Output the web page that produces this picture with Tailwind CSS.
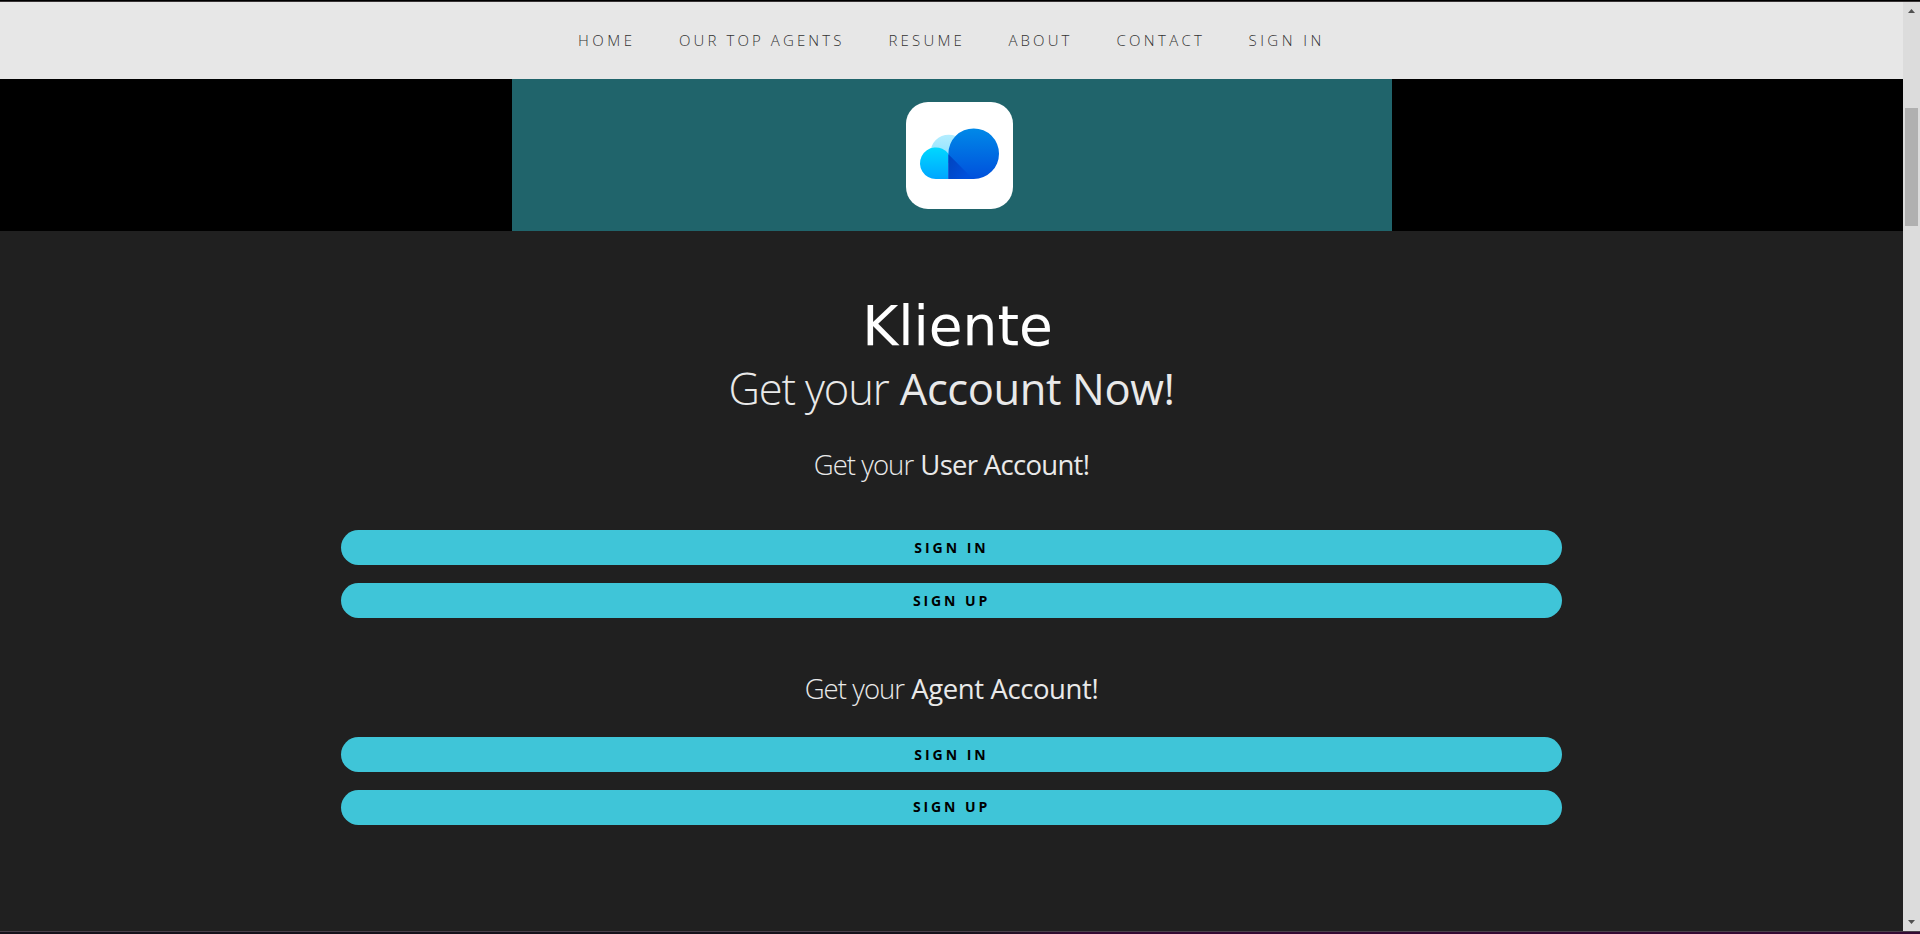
<!DOCTYPE html>
<html lang="en">
<head>
<meta charset="utf-8">
<title>Kliente</title>
<script src="https://cdn.jsdelivr.net/npm/@tailwindcss/browser@4"></script>
</head>
<body class="w-[1920px] h-[934px] overflow-hidden flex flex-col bg-[#202020] font-['Open_Sans',sans-serif]">
<div class="h-[2px] shrink-0 bg-black border-b border-[#383435]"></div>
<div class="flex h-[929px] shrink-0">
  <main class="w-[1903px] flex flex-col">
    <nav class="h-[77px] shrink-0 bg-[#e7e7e7] flex items-center pl-[578px] text-[15px] font-light text-[#333] whitespace-nowrap">
      <a class="w-[101px] tracking-[3.5px]">HOME</a>
      <a class="w-[209.5px] tracking-[3.1px]">OUR TOP AGENTS</a>
      <a class="w-[120px] tracking-[3.2px]">RESUME</a>
      <a class="w-[108px] tracking-[3.1px]">ABOUT</a>
      <a class="w-[132px] tracking-[3.3px]">CONTACT</a>
      <a class="tracking-[3.45px]">SIGN IN</a>
    </nav>
    <header class="h-[152px] shrink-0 bg-black flex justify-center">
      <div class="w-[880px] ml-px bg-[#20646b] flex justify-center pt-[22.5px] pl-[15px]">
        <svg class="w-[107px] h-[107px]" viewBox="0 0 107 107">
          <defs>
            <linearGradient id="a" x1="0" y1="0" x2="0" y2="1"><stop offset="0" stop-color="#0089e8"/><stop offset="1" stop-color="#0050dc"/></linearGradient>
            <linearGradient id="b" x1="0" y1="0" x2="0" y2="1"><stop offset="0" stop-color="#00d8ff"/><stop offset="1" stop-color="#00a6ff"/></linearGradient>
            <linearGradient id="c" x1="0" y1="0" x2="0" y2="1"><stop offset="0" stop-color="#b4edff"/><stop offset="1" stop-color="#84e0ff"/></linearGradient>
            <linearGradient id="d" x1="0" y1="0.3" x2="0.8" y2="0.8"><stop offset="0" stop-color="#0045c2"/><stop offset="1" stop-color="#0050dc"/></linearGradient>
          </defs>
          <rect width="107" height="107" rx="22" fill="#fff"/>
          <path d="M24.4 51a18.3 18.3 0 0 1 36.6 0v10H24.4z" fill="url(#c)"/>
          <path d="M42.4 77H29.8a15.8 15.8 0 1 1 12.6-25.3z" fill="url(#b)"/>
          <path d="M42.4 77V51.7A25.3 25.3 0 1 1 67.7 77z" fill="url(#a)"/>
          <path d="M42.4 52.3L67 77H42.4z" fill="url(#d)"/>
        </svg>
      </div>
    </header>
    <section class="flex flex-col items-center pt-[65px] text-[#e9e9e9] whitespace-nowrap">
      <h1 class="pl-[12px] text-[55px] leading-[60px] text-white font-['DejaVu_Sans',sans-serif]">Kliente</h1>
      <h2 class="mt-[3px] text-[43.5px] leading-[60px] font-light"><span class="tracking-[-1.15px]">Get your</span> <span class="font-normal tracking-[-0.4px]">Account Now!</span></h2>
      <h3 class="mt-[26px] text-[27.5px] leading-[40px] font-light"><span class="tracking-[-0.95px]">Get your</span> <span class="font-normal tracking-[-0.7px]">User Account!</span></h3>
      <div class="mt-[45px] w-[1221px] flex flex-col gap-[18px] text-black text-[14px] font-bold">
        <button class="h-[35px] rounded-full bg-[#3fc5d8] tracking-[3px]">SIGN IN</button>
        <button class="h-[35px] rounded-full bg-[#3fc5d8] tracking-[2.9px]">SIGN UP</button>
      </div>
      <h3 class="mt-[51px] text-[27.5px] leading-[40px] font-light"><span class="tracking-[-0.95px]">Get your</span> <span class="font-normal tracking-[-0.4px]">Agent Account!</span></h3>
      <div class="mt-[28px] w-[1221px] flex flex-col gap-[18px] text-black text-[14px] font-bold">
        <button class="h-[35px] rounded-full bg-[#3fc5d8] tracking-[3px]">SIGN IN</button>
        <button class="h-[35px] rounded-full bg-[#3fc5d8] tracking-[2.9px] pb-[2px]">SIGN UP</button>
      </div>
    </section>
  </main>
  <aside class="w-[17px] bg-[#dcdcdc] flex flex-col items-center">
    <svg class="mt-[7px] w-[7px] h-[4px]" viewBox="0 0 7 4"><path d="M3.5 0L7 4H0z" fill="#505050"/></svg>
    <div class="mt-[95px] w-[13px] h-[118px] bg-[#b0b0b0]"></div>
    <svg class="mt-auto mb-[7px] w-[7px] h-[4px]" viewBox="0 0 7 4"><path d="M0 0h7L3.5 4z" fill="#505050"/></svg>
  </aside>
</div>
<div class="h-[3px] shrink-0 bg-linear-to-r from-[#15121b] from-50% to-[#330a33] to-56% border-t border-[#4a404a]"></div>
</body>
</html>
